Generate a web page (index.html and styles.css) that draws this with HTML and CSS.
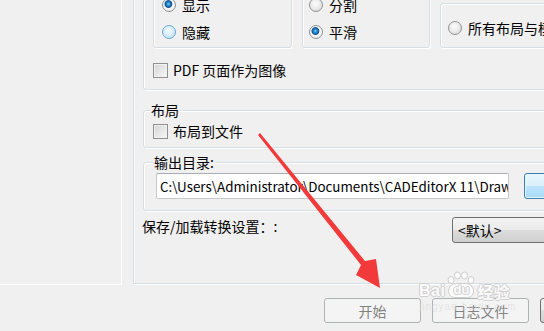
FILE: index.html
```html
<!DOCTYPE html>
<html lang="zh-CN">
<head>
    <meta charset="UTF-8">
    <meta name="viewport" content="width=device-width, initial-scale=1.0">
    <title>转换设置</title>
    <link rel="stylesheet" href="styles.css">
</head>
<body>
    <div class="window">
        <div class="main">
            <div class="sidebar"></div>

            <div class="page">
                <div class="group outer">
                    <div class="group-row">
                        <div class="group small g-show">
                            <label class="radio checked"><span class="dot"></span>显示</label>
                            <label class="radio hover"><span class="dot"></span>隐藏</label>
                        </div>
                        <div class="group small g-curve">
                            <label class="radio"><span class="dot"></span>分割</label>
                            <label class="radio checked"><span class="dot"></span>平滑</label>
                        </div>
                        <div class="group small g-layouts">
                            <label class="radio"><span class="dot"></span>所有布局与模型</label>
                        </div>
                    </div>
                    <label class="check"><span class="box"></span>PDF 页面作为图像</label>
                </div>

                <div class="group titled layout">
                    <div class="group-title">布局</div>
                    <label class="check"><span class="box"></span>布局到文件</label>
                </div>

                <div class="group titled output">
                    <div class="group-title">输出目录:</div>
                    <div class="path-row">
                        <div class="path-input">C:\Users\Administrator\Documents\CADEditorX 11\Drawings</div>
                        <button class="browse">浏览...</button>
                    </div>
                </div>

                <div class="preset-row">
                    <span class="preset-label">保存/加载转换设置：:</span>
                    <div class="combo">&lt;默认&gt;</div>
                </div>
            </div>
        </div>

        <div class="footer">
            <button class="btn" disabled>开始</button>
            <button class="btn" disabled>日志文件</button>
            <button class="btn active">关闭</button>
        </div>

        <!-- red pointer drawn over the dialog -->
        <svg class="arrow" width="544" height="331" viewBox="0 0 544 331">
            <polygon points="260,133 365,261 376,259 380,288 356,275 361,265 258,135" fill="#f23a3a"/>
        </svg>

        <div class="watermark">
            <div class="wm-main">
                <span class="wm-bai">Bai</span>
                <div class="wm-paw">
                    <svg class="toes" width="28" height="13" viewBox="0 0 28 13">
                        <ellipse cx="4" cy="9" rx="3" ry="3.5" />
                        <ellipse cx="10.5" cy="4.5" rx="3" ry="3.5" />
                        <ellipse cx="17.5" cy="4.5" rx="3" ry="3.5" />
                        <ellipse cx="24" cy="9" rx="3" ry="3.5" />
                    </svg>
                    <div class="palm">du</div>
                </div>
                <span class="wm-cn">经验</span>
            </div>
            <div class="wm-sub">jingyan.baidu.com</div>
        </div>
    </div>
</body>
</html>
```

FILE: styles.css
```css
* {
    box-sizing: border-box;
}
body {
    margin: 0;
    background: #f0f0f0;
    font-family: "Noto Sans CJK SC", "Noto Sans", sans-serif;
    font-size: 14px;
    color: #000;
}
.window {
    position: relative;
    width: 544px;
    height: 331px;
    overflow: hidden;
    background: #f0f0f0;
}
.main {
    display: flex;
    height: 285px;
}
.sidebar {
    flex: none;
    width: 122px;
    height: 285px;
    border-right: 1px solid #fff;
    border-bottom: 1px solid #fff;
}
.page {
    flex: none;
    width: 600px;
    height: 284px;
    margin-left: 11px;
    padding: 0 10px 0 9px;
    border-left: 1px solid #d5dfe5;
    border-bottom: 1px solid #d5dfe5;
    box-shadow: inset 1px 0 0 #fff, 1px 1px 0 #fff;
}

/* group boxes */
.group {
    border: 1px solid #d5dfe5;
    border-radius: 3px;
    box-shadow: inset 1px 1px 0 #fff, 1px 1px 0 #fff;
}
.outer {
    margin-top: -37px;
    padding: 16px 9px 11px;
}
.group-row {
    display: flex;
    align-items: flex-end;
    gap: 10px;
}
.small {
    display: flex;
    flex-direction: column;
    gap: 7px;
    padding: 14px 6px 5px;
}
.g-show {
    width: 139px;
    padding-left: 8px;
}
.g-curve {
    width: 128px;
}
.g-layouts {
    flex: 1;
    padding-left: 7px;
    padding-bottom: 9px;
}
.group-title {
    width: fit-content;
    margin: -9px 0 0 -3px;
    padding: 0 1px;
    line-height: 16px;
    background: #f0f0f0;
}
.layout {
    margin-top: 20px;
    padding: 0 9px 8px;
}
.layout .check {
    margin-top: 5px;
}
.output {
    margin-top: 14px;
    padding: 0 0 11px 12px;
}

/* radio and check controls */
.radio, .check {
    display: flex;
    align-items: center;
    height: 20px;
    white-space: nowrap;
}
.check {
    height: 16px;
    margin-top: 14px;
}
.dot {
    flex: none;
    width: 14px;
    height: 14px;
    margin-right: 6px;
    border-radius: 50%;
    border: 1px solid #8f9496;
    background: radial-gradient(circle at 45% 40%, #fdfdfd 0, #ececec 45%, #d2d2d2 100%);
}
.hover .dot {
    border-color: #6fa7cc;
    background: radial-gradient(circle at 45% 40%, #f4fbff 0, #d8eefb 45%, #b4d8ef 100%);
}
.checked .dot {
    background: radial-gradient(circle at 45% 42%, #7cc8f4 0, #2a8ad0 18%, #0c548e 36%, #f7f7f7 45%, #dedede 100%);
}
.box {
    flex: none;
    width: 15px;
    height: 15px;
    margin-right: 5px;
    border: 1px solid #8e8f8f;
    background: linear-gradient(135deg, #d4d4d4, #f8f8f8);
    box-shadow: inset 0 0 0 1px #f2f2f2;
}

/* output path */
.path-row {
    display: flex;
    align-items: center;
    gap: 15px;
    margin-top: 3px;
}
.path-input {
    flex: none;
    width: 353px;
    height: 26px;
    padding: 0 3px;
    font-size: 13.4px;
    line-height: 24px;
    background: #fff;
    border: 1px solid #c5c9cc;
    border-top-color: #abadb3;
    border-radius: 2px;
    white-space: nowrap;
    overflow: hidden;
}
.browse {
    flex: none;
    width: 95px;
    height: 26px;
    font: inherit;
    border: 1px solid #3c7fb1;
    border-radius: 3px;
    background: linear-gradient(#eaf6fd 0%, #d9f0fc 50%, #bee6fd 50%, #a7d9f5 100%);
    box-shadow: inset 0 0 0 1px #e6f5fd;
}

/* preset row */
.preset-row {
    display: flex;
    align-items: flex-start;
    margin-top: 6px;
    margin-left: -1px;
}
.preset-label {
    flex: none;
    width: 310px;
    line-height: 18px;
}
.combo {
    flex: none;
    width: 150px;
    height: 26px;
    padding-left: 5px;
    line-height: 24px;
    border: 1px solid #707070;
    border-radius: 3px;
    background: linear-gradient(#f2f2f2 0%, #ebebeb 50%, #dddddd 50%, #cfcfcf 100%);
}

/* bottom buttons */
.footer {
    display: flex;
    gap: 11px;
    padding: 13px 0 0 324px;
}
.btn {
    flex: none;
    width: 97px;
    height: 25px;
    font: inherit;
    color: #838383;
    border: 1px solid #adb2b5;
    border-radius: 3px;
    background: #f4f4f4;
}
.btn.active {
    color: #000;
    border-color: #707070;
    background: linear-gradient(#f2f2f2 0%, #ebebeb 50%, #dddddd 50%, #cfcfcf 100%);
}

/* overlays */
.arrow {
    position: absolute;
    left: 0;
    top: 0;
    pointer-events: none;
}
.watermark {
    position: absolute;
    left: 419px;
    top: 271px;
    pointer-events: none;
    color: #fbfbfb;
    font-family: "Liberation Sans", "Noto Sans CJK SC", sans-serif;
    font-weight: bold;
    text-shadow: 1px 0 0 #cfcfcf, -1px 0 0 #cfcfcf, 0 1px 0 #cfcfcf, 0 -1px 0 #cfcfcf;
}
.wm-main {
    display: flex;
    align-items: flex-end;
}
.wm-bai {
    font-size: 16px;
    line-height: 14px;
    letter-spacing: 0.5px;
}
.wm-paw {
    display: flex;
    flex-direction: column;
    align-items: center;
    width: 28px;
    margin-left: 2px;
}
.toes {
    display: block;
    fill: #fbfbfb;
    stroke: #cfcfcf;
}
.palm {
    width: 26px;
    height: 15px;
    margin-top: -1px;
    border: 1px solid #cfcfcf;
    border-radius: 10px 10px 8px 8px;
    background: #fbfbfb;
    font-size: 13px;
    line-height: 12px;
    text-align: center;
}
.wm-cn {
    margin-left: 2px;
    font-family: "Noto Sans CJK SC", sans-serif;
    font-size: 16px;
    line-height: 14px;
}
.wm-sub {
    margin-top: 3px;
    font-size: 10px;
    font-weight: normal;
    letter-spacing: 1px;
    color: rgba(220, 220, 220, 0.7);
    text-shadow: none;
}
```
